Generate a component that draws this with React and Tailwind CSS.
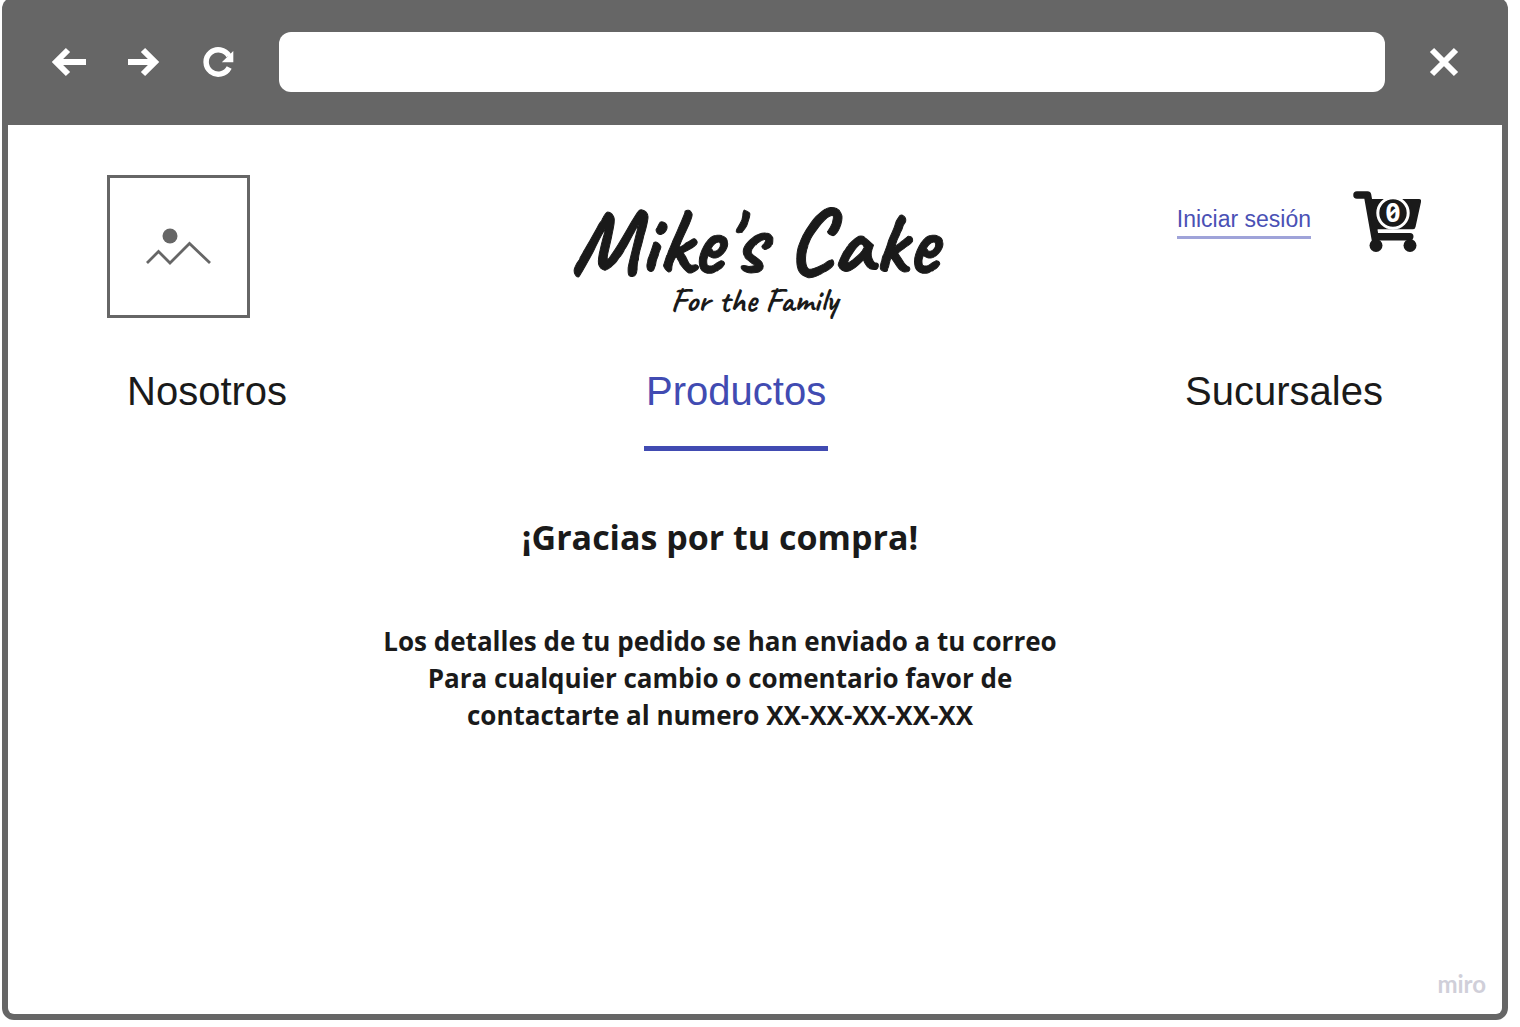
function BackIcon() {
  return (
    <svg width="36" height="30" viewBox="0 0 36 30" fill="none" stroke="#fff" strokeWidth="6" aria-hidden="true">
      <path d="M17 3 5 15l12 12M4 15h31" />
    </svg>
  );
}

function ForwardIcon() {
  return (
    <svg width="34" height="30" viewBox="0 0 34 30" fill="none" stroke="#fff" strokeWidth="6" aria-hidden="true">
      <path d="M16 3 28 15 16 27M1 15h28" />
    </svg>
  );
}

function ReloadIcon() {
  return (
    <svg width="32" height="32" viewBox="0 0 32 32" fill="none" aria-hidden="true">
      <path d="M26.200 21.500A12.200 12.200 0 1 1 25.900 9.900" stroke="#fff" strokeWidth="5.500" />
      <path d="M30.300 5v11.300H18.800z" fill="#fff" />
    </svg>
  );
}

function CloseIcon() {
  return (
    <svg width="30" height="30" viewBox="0 0 30 30" fill="none" stroke="#fff" strokeWidth="6" aria-hidden="true">
      <path d="M3 3l24 24M27 3 3 27" />
    </svg>
  );
}

function PlaceholderIcon() {
  return (
    <svg width="66" height="38" viewBox="0 0 66 38" fill="none" aria-hidden="true">
      <circle cx="24" cy="8" r="7.500" fill="#666" />
      <path d="M1 35 12.500 23.500 24 35 43.500 15.500 64 35" stroke="#666" strokeWidth="2.800" />
    </svg>
  );
}

function CartIcon() {
  return (
    <svg width="68" height="61" viewBox="0 0 68 61" aria-hidden="true">
      <path d="M4 4h10.500l8 45" fill="none" stroke="#1a1a1a" strokeWidth="7.500" strokeLinecap="round" strokeLinejoin="round" />
      <path d="M15 8h51q2.500 0 2 3l-5.500 25q-.6 2.500-3 2.500H24v3.500h33q3.500 0 3.500 3.500t-3.500 4H22z" fill="#1a1a1a" />
      <path d="M25 40h38" stroke="#fff" strokeWidth="3" />
      <circle cx="23" cy="54.500" r="6.500" fill="#1a1a1a" />
      <circle cx="57" cy="54.500" r="6.500" fill="#1a1a1a" />
      <circle cx="40" cy="22" r="15.200" fill="#1a1a1a" stroke="#fff" strokeWidth="3" />
    </svg>
  );
}

export default function App() {
  return (
    <div className="min-h-screen flex flex-col bg-white pl-0.5 pr-3 pb-[7px] font-['Liberation_Sans',Arial,sans-serif] text-[#1a1a1a]">
      <div className="-mt-[3px] flex-1 flex flex-col rounded-xl bg-[#666] px-1.5 pb-1.5">
        <header className="h-32 flex items-center pt-0.5 pl-[43px] pr-[43px]">
          <button type="button" aria-label="Atrás" className="mr-10"><BackIcon /></button>
          <button type="button" aria-label="Adelante" className="mr-[42px]"><ForwardIcon /></button>
          <button type="button" aria-label="Recargar" className="mr-11"><ReloadIcon /></button>
          <input type="text" aria-label="Dirección" className="min-w-0 flex-1 h-[60px] rounded-xl bg-white px-5 text-2xl outline-none" />
          <button type="button" aria-label="Cerrar" className="ml-11"><CloseIcon /></button>
        </header>

        <div className="flex-1 flex flex-col rounded-b-md bg-white">
          <main className="flex-1 flex flex-col">
            <div className="grid grid-cols-[1fr_auto_1fr] items-start pt-[50px] pl-[99px] pr-[81px]">
              <div className="size-[143px] border-[3px] border-[#666] flex items-center justify-center">
                <PlaceholderIcon />
              </div>
              <div className="pt-[25px] pr-5 text-center font-bold font-['Caveat',cursive]">
                <h1 className="text-[92px] leading-[84px] [-webkit-text-stroke:1px_#1a1a1a]">Mike's Cake</h1>
                <p className="text-[34px] leading-8">For the Family</p>
              </div>
              <div className="flex justify-end gap-[42px] pt-4">
                <a href="#sesion" className="mt-3 h-9 border-b-[3px] border-[#9fa3d9] text-[23px] leading-8 text-[#4a51b5]">Iniciar sesión</a>
                <a href="#carrito" aria-label="Carrito" className="relative">
                  <CartIcon />
                  <span className="absolute left-0 top-0 w-20 h-11 text-center text-[26px] leading-[42px] font-bold text-white font-['Open_Sans',sans-serif] slashed-zero">0</span>
                </a>
              </div>
            </div>

            <nav className="flex justify-between items-start pt-[46px] pl-[119px] pr-[119px] text-[40px] leading-[54px]">
              <a href="#nosotros">Nosotros</a>
              <a href="#productos" className="border-b-[5px] border-[#414bb2] pb-7 px-0.5 text-[#414bb2]">Productos</a>
              <a href="#sucursales">Sucursales</a>
            </nav>

            <section className="pt-[62px] pr-[70px] text-center font-bold font-['Open_Sans',sans-serif]">
              <h2 className="text-[34px] leading-[48px]">¡Gracias por tu compra!</h2>
              <p className="mt-[62px] text-[26px] leading-[37px]">
                Los detalles de tu pedido se han enviado a tu correo<br />
                Para cualquier cambio o comentario favor de<br />
                contactarte al numero XX-XX-XX-XX-XX
              </p>
            </section>
          </main>

          <footer className="pr-4 pb-4 text-right text-2xl leading-7 font-bold text-[#d0cfd9] font-['Lato',sans-serif]">miro</footer>
        </div>
      </div>
    </div>
  );
}
